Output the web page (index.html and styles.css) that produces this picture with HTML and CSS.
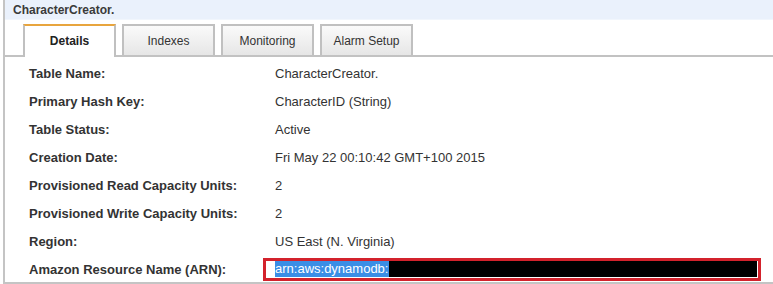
FILE: index.html
```html
<!DOCTYPE html>
<html lang="en">
<head>
    <meta charset="UTF-8">
    <title>CharacterCreator - Details</title>
    <link rel="stylesheet" href="styles.css">
</head>
<body>
<div class="panel">
    <div class="panel-head"><span class="title">CharacterCreator.</span></div>
    <div class="tabs">
        <div class="tab active">Details</div>
        <div class="tab">Indexes</div>
        <div class="tab">Monitoring</div>
        <div class="tab">Alarm Setup</div>
    </div>
    <div class="details">
        <div class="row"><span class="label">Table Name:</span><span class="value">CharacterCreator.</span></div>
        <div class="row"><span class="label">Primary Hash Key:</span><span class="value">CharacterID (String)</span></div>
        <div class="row"><span class="label">Table Status:</span><span class="value">Active</span></div>
        <div class="row"><span class="label">Creation Date:</span><span class="value">Fri May 22 00:10:42 GMT+100 2015</span></div>
        <div class="row"><span class="label">Provisioned Read Capacity Units:</span><span class="value">2</span></div>
        <div class="row"><span class="label">Provisioned Write Capacity Units:</span><span class="value">2</span></div>
        <div class="row"><span class="label">Region:</span><span class="value">US East (N. Virginia)</span></div>
        <div class="row"><span class="label">Amazon Resource Name (ARN):</span>
            <span class="value">
                <span class="arn-box"><span class="selected">arn:aws:dynamodb:</span><span class="redacted"></span></span>
            </span>
        </div>
    </div>
</div>
</body>
</html>
```

FILE: styles.css
```css
body {
    margin: 0;
    font-family: "Liberation Sans", Arial, sans-serif;
    font-size: 12px;
    color: #333333;
    background: #ffffff;
}

.panel {
    margin-left: 3px;
    height: 282px;
    border-left: 2px solid #c4c4c4;
    border-bottom: 2px solid #c4c4c4;
    overflow: hidden;
}

.panel-head {
    height: 19px;
    background-color: #eaf1fc;
    border-bottom: 1px solid #f1f6fd;
    padding-left: 8px;
    line-height: 21px;
}

.title {
    font-weight: bold;
    font-size: 12px;
    color: #3a3a3a;
}

.tabs {
    display: flex;
    gap: 6px;
    margin-top: 4px;
    padding-left: 18px;
    border-bottom: 2px solid #c2c2c2;
}

.tab {
    width: 89px;
    height: 29px;
    line-height: 30px;
    text-align: center;
    color: #333333;
    border: 2px solid #c0c0c0;
    border-bottom: none;
    background: linear-gradient(#fafafa, #e6e6e6);
}

.tab.active {
    font-weight: bold;
    color: #222222;
    background: #ffffff;
    border-top: 2px solid #e8a53e;
    margin-bottom: -2px;
    height: 31px;
}

.details {
    padding-top: 2px;
    font-size: 13px;
}

.row {
    display: grid;
    grid-template-columns: 246px 1fr;
    height: 28px;
    align-items: center;
    padding-left: 24px;
}

.label {
    font-weight: bold;
    color: #333333;
}

.value {
    display: flex;
    align-items: center;
}

.arn-box {
    display: flex;
    align-items: center;
    box-sizing: border-box;
    width: 498px;
    height: 23px;
    margin-left: -12px;
    padding: 0 1px 0 9px;
    border: 3px solid #d3222c;
}

.selected {
    background-color: #3a8ee6;
    color: #ffffff;
    line-height: 16px;
    padding-right: 1px;
}

.redacted {
    flex: 1;
    height: 16px;
    background-color: #000000;
}
```
